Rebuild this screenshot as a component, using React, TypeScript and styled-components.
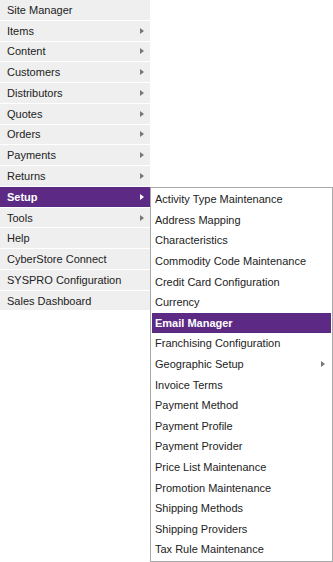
import React from "react";
import styled, { createGlobalStyle } from "styled-components";

const Global = createGlobalStyle`
  html, body { margin: 0; padding: 0; background: #fff; }
  body { font-family: "Liberation Sans", Arial, sans-serif; font-size: 11px; color: #222; }
`;

const PURPLE = "#5c2a84";

const Page = styled.div`
  position: relative;
  width: 333px;
  height: 562px;
`;

const MainMenu = styled.ul`
  list-style: none;
  margin: 0;
  padding: 0;
  width: 150px;
`;

const MainItem = styled.li<{ $active?: boolean }>`
  position: relative;
  display: flex;
  align-items: center;
  justify-content: space-between;
  height: 19.77px;
  margin-bottom: 1px;
  padding: 0 6px 0 7px;
  box-sizing: border-box;
  background: ${(p) => (p.$active ? PURPLE : "#efefef")};
  color: ${(p) => (p.$active ? "#fff" : "#222")};
  font-weight: ${(p) => (p.$active ? "bold" : "normal")};
  white-space: nowrap;
`;

const Arrow = styled.span<{ $light?: boolean }>`
  width: 0;
  height: 0;
  border-top: 3px solid transparent;
  border-bottom: 3px solid transparent;
  border-left: 4px solid ${(p) => (p.$light ? "#fff" : "#777")};
`;

const SubMenu = styled.ul`
  position: absolute;
  left: 150px;
  top: 187px;
  width: 183px;
  box-sizing: border-box;
  list-style: none;
  margin: 0;
  padding: 1px;
  background: #fff;
  border: 1px solid #a8a8a8;
`;

const SubItem = styled.li<{ $active?: boolean }>`
  display: flex;
  align-items: center;
  justify-content: space-between;
  height: 20.6px;
  padding: 0 6px 0 3px;
  box-sizing: border-box;
  background: ${(p) => (p.$active ? PURPLE : "transparent")};
  color: ${(p) => (p.$active ? "#fff" : "#222")};
  font-weight: ${(p) => (p.$active ? "bold" : "normal")};
  white-space: nowrap;
`;

const mainItems: { label: string; sub?: boolean; active?: boolean }[] = [
  { label: "Site Manager" },
  { label: "Items", sub: true },
  { label: "Content", sub: true },
  { label: "Customers", sub: true },
  { label: "Distributors", sub: true },
  { label: "Quotes", sub: true },
  { label: "Orders", sub: true },
  { label: "Payments", sub: true },
  { label: "Returns", sub: true },
  { label: "Setup", sub: true, active: true },
  { label: "Tools", sub: true },
  { label: "Help" },
  { label: "CyberStore Connect" },
  { label: "SYSPRO Configuration" },
  { label: "Sales Dashboard" },
];

const subItems: { label: string; sub?: boolean; active?: boolean }[] = [
  { label: "Activity Type Maintenance" },
  { label: "Address Mapping" },
  { label: "Characteristics" },
  { label: "Commodity Code Maintenance" },
  { label: "Credit Card Configuration" },
  { label: "Currency" },
  { label: "Email Manager", active: true },
  { label: "Franchising Configuration" },
  { label: "Geographic Setup", sub: true },
  { label: "Invoice Terms" },
  { label: "Payment Method" },
  { label: "Payment Profile" },
  { label: "Payment Provider" },
  { label: "Price List Maintenance" },
  { label: "Promotion Maintenance" },
  { label: "Shipping Methods" },
  { label: "Shipping Providers" },
  { label: "Tax Rule Maintenance" },
];

export default function App() {
  return (
    <Page>
      <Global />
      <MainMenu>
        {mainItems.map((m) => (
          <MainItem key={m.label} $active={m.active}>
            <span>{m.label}</span>
            {m.sub && <Arrow $light={m.active} />}
          </MainItem>
        ))}
      </MainMenu>
      <SubMenu>
        {subItems.map((s) => (
          <SubItem key={s.label} $active={s.active}>
            <span>{s.label}</span>
            {s.sub && <Arrow $light={s.active} />}
          </SubItem>
        ))}
      </SubMenu>
    </Page>
  );
}
